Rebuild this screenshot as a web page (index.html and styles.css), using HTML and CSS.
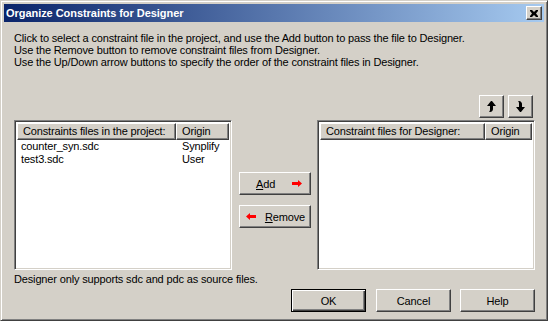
FILE: index.html
```html
<!DOCTYPE html>
<html lang="en">
<head>
    <meta charset="UTF-8">
    <title>Organize Constraints for Designer</title>
    <link rel="stylesheet" href="styles.css">
</head>
<body>
    <div class="window">
        <div class="titlebar">
            <span class="title">Organize Constraints for Designer</span>
            <button class="close-btn">
                <svg width="8" height="7" viewBox="0 0 8 7"><path d="M0 0h2l2 2 2-2h2v1l-2 2.5 2 2.5v1h-2l-2-2-2 2h-2v-1l2-2.5-2-2.5z" fill="#000"/></svg>
            </button>
        </div>

        <div class="content">
            <div class="intro">
                <p>Click to select a constraint file in the project, and use the Add button to pass the file to Designer.</p>
                <p>Use the Remove button to remove constraint files from Designer.</p>
                <p>Use the Up/Down arrow buttons to specify the order of the constraint files in Designer.</p>
            </div>

            <div class="order-row">
                <button class="btn icon-btn">
                    <svg width="9" height="11" viewBox="0 0 9 11"><path d="M4 0h1l4 5h-3v3c0 1 -1 3 -3 3h-1c1-1 1-2 1-3v-3h-3z" fill="#000"/></svg>
                </button>
                <button class="btn icon-btn">
                    <svg width="9" height="11" viewBox="0 0 9 11"><path d="M4 11h1l4-5h-3v-3c0-1 -1-3 -3-3h-1c1 1 1 2 1 3v3h-3z" fill="#000"/></svg>
                </button>
            </div>

            <div class="lists">
                <div class="listview project-list">
                    <div class="lv-header">
                        <div class="col-name">Constraints files in the project:</div>
                        <div class="col-origin">Origin</div>
                    </div>
                    <div class="lv-row"><span class="cell-name">counter_syn.sdc</span><span class="cell-origin">Synplify</span></div>
                    <div class="lv-row"><span class="cell-name">test3.sdc</span><span class="cell-origin">User</span></div>
                </div>

                <div class="move-buttons">
                    <button class="btn move-btn add-btn"><span><u>A</u>dd</span>
                        <svg width="10" height="7" viewBox="0 0 10 7"><path d="M0 2h6v-2l4 3.5-4 3.5v-2h-6z" fill="#f00"/></svg>
                    </button>
                    <button class="btn move-btn remove-btn">
                        <svg width="10" height="7" viewBox="0 0 10 7"><path d="M10 2h-6v-2l-4 3.5 4 3.5v-2h6z" fill="#f00"/></svg>
                        <span><u>R</u>emove</span>
                    </button>
                </div>

                <div class="listview designer-list">
                    <div class="lv-header">
                        <div class="col-name">Constraint files for Designer:</div>
                        <div class="col-origin">Origin</div>
                    </div>
                </div>
            </div>

            <p class="note">Designer only supports sdc and pdc as source files.</p>

            <div class="dialog-buttons">
                <button class="btn default-btn">OK</button>
                <button class="btn">Cancel</button>
                <button class="btn">Help</button>
            </div>
        </div>
    </div>
</body>
</html>
```

FILE: styles.css
```css
* {
    margin: 0;
    padding: 0;
    box-sizing: border-box;
}

body {
    font-family: 'Liberation Sans', Arial, sans-serif;
    font-size: 11px;
    color: #000;
    background: #d4d0c8;
}

.window {
    width: 548px;
    height: 321px;
    background: #d4d0c8;
    border: 1px solid;
    border-color: #d4d0c8 #404040 #404040 #d4d0c8;
    box-shadow: inset 1px 1px 0 #fff, inset -1px -1px 0 #808080;
    padding: 3px;
    display: flex;
    flex-direction: column;
}

.titlebar {
    height: 18px;
    background: linear-gradient(90deg, #0a246a 0%, #a6caf0 100%);
    display: flex;
    align-items: center;
    justify-content: space-between;
    padding: 0 2px 0 2px;
}

.title {
    color: #fff;
    font-weight: bold;
    font-size: 11px;
    letter-spacing: -0.05px;
}

.close-btn {
    width: 16px;
    height: 14px;
    background: #d4d0c8;
    border: 1px solid;
    border-color: #fff #404040 #404040 #fff;
    box-shadow: inset -1px -1px 0 #808080;
    display: flex;
    align-items: center;
    justify-content: center;
}

.content {
    flex: 1;
    padding: 10px 9px 0 10px;
    display: flex;
    flex-direction: column;
    letter-spacing: -0.15px;
}

.intro p {
    line-height: 12px;
}

.order-row {
    display: flex;
    justify-content: flex-end;
    gap: 4px;
    margin-top: 27px;
    padding-right: 2px;
}

.btn {
    font-family: inherit;
    font-size: 11px;
    letter-spacing: inherit;
    color: #000;
    background: #d4d0c8;
    border: 1px solid;
    border-color: #fff #404040 #404040 #fff;
    box-shadow: inset -1px -1px 0 #808080;
    display: flex;
    align-items: center;
    justify-content: center;
}

.icon-btn {
    width: 25px;
    height: 23px;
}

.lists {
    display: grid;
    grid-template-columns: 218px 73px 218px;
    column-gap: 6px;
    margin-top: 2px;
}

.listview {
    height: 150px;
    background: #fff;
    border: 1px solid;
    border-color: #808080 #fff #fff #808080;
    box-shadow: inset 1px 1px 0 #404040, inset -1px -1px 0 #d4d0c8;
    padding: 2px;
}

.lv-header {
    display: flex;
    height: 17px;
}

.lv-header div {
    background: #d4d0c8;
    border: 1px solid;
    border-color: #fff #404040 #404040 #fff;
    box-shadow: inset -1px -1px 0 #808080;
    padding: 0 5px;
    line-height: 14px;
    white-space: nowrap;
    overflow: hidden;
}

.lv-header .col-name {
    width: 159px;
}

.designer-list .lv-header .col-name {
    width: 165px;
}

.lv-header .col-origin {
    flex: 1;
}

.lv-row {
    display: flex;
    line-height: 13px;
}

.lv-row:first-of-type {
    margin-top: 1px;
}

.cell-name {
    width: 159px;
    padding-left: 4px;
}

.cell-origin {
    padding-left: 6px;
}

.move-buttons {
    display: flex;
    flex-direction: column;
    gap: 10px;
    padding-top: 52px;
    padding-left: 1px;
}

.move-btn {
    height: 23px;
    justify-content: space-between;
}

.add-btn {
    padding: 0 8px 0 16px;
}

.remove-btn {
    padding: 0 5px 0 6px;
}

.move-btn u {
    text-decoration: underline;
}

.note {
    margin-top: 3px;
    line-height: 13px;
}

.dialog-buttons {
    display: flex;
    justify-content: flex-end;
    gap: 9px;
    margin-top: 3px;
}

.dialog-buttons .btn {
    width: 75px;
    height: 23px;
}

.dialog-buttons .default-btn {
    margin-right: 1px;
    border: 1px solid #000;
    box-shadow: inset 1px 1px 0 #fff, inset -1px -1px 0 #404040, inset -2px -2px 0 #808080;
}
```
